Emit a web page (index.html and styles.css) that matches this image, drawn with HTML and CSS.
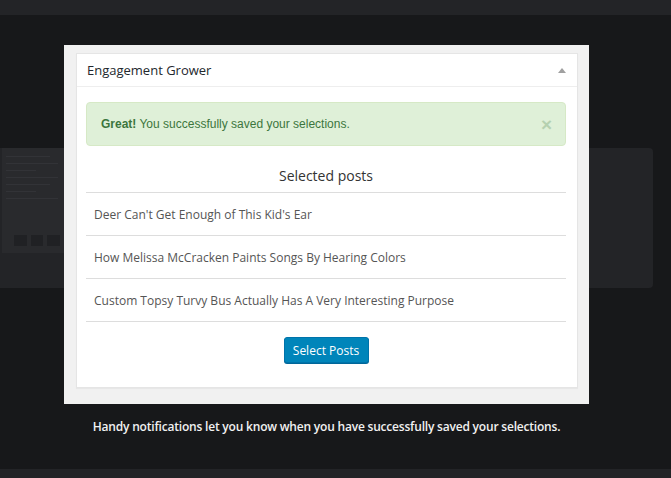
FILE: index.html
```html
<!DOCTYPE html>
<html>
<head>
<meta charset="utf-8">
<link rel="stylesheet" href="styles.css">
</head>
<body>
<div class="topbar"></div>
<div class="stage">
  <div class="bgpanel">
    <div class="bgthumb">
      <div class="ghost-line w1"></div>
      <div class="ghost-line w2"></div>
      <div class="ghost-line w3"></div>
      <div class="ghost-line w2"></div>
      <div class="ghost-line w1"></div>
      <div class="ghost-line w3"></div>
      <div class="ghost-line w2"></div>
      <div class="ghost-thumbs"><span></span><span></span><span></span></div>
    </div>
  </div>
  <div class="overlay">
    <div class="modal">
      <div class="widget">
        <div class="widget-head">
          <span class="widget-title">Engagement Grower</span>
          <span class="toggle"></span>
        </div>
        <div class="widget-body">
          <div class="alert">
            <span><strong>Great!</strong> You successfully saved your selections.</span>
            <span class="close">×</span>
          </div>
          <div class="list-title">Selected posts</div>
          <ul class="posts">
            <li>Deer Can't Get Enough of This Kid's Ear</li>
            <li>How Melissa McCracken Paints Songs By Hearing Colors</li>
            <li>Custom Topsy Turvy Bus Actually Has A Very Interesting Purpose</li>
          </ul>
          <div class="actions"><button class="btn">Select Posts</button></div>
        </div>
      </div>
    </div>
    <p class="caption">Handy notifications let you know when you have successfully saved your selections.</p>
  </div>
</div>
<div class="bottombar"></div>
</body>
</html>
```
FILE: styles.css
```css
html, body {
  margin: 0;
  padding: 0;
}
body {
  background: #17181a;
  font-family: "Open Sans", "Liberation Sans", sans-serif;
  width: 671px;
  height: 478px;
  overflow: hidden;
}
.topbar {
  height: 15px;
  background: #232427;
}
.bottombar {
  height: 9px;
  background: #232427;
}
.stage {
  position: relative;
  height: 454px;
}
.bgpanel {
  position: relative;
  top: 133px;
  width: 653px;
  height: 140px;
  background: #232427;
  border-radius: 0 4px 4px 0;
}
.bgthumb {
  margin-left: 2px;
  width: 62px;
  height: 105px;
  background: #292a2d;
  padding: 8px 4px 0 4px;
  box-sizing: border-box;
  display: flex;
  flex-direction: column;
  gap: 6px;
}
.ghost-line {
  height: 1px;
  background: #323337;
}
.ghost-line.w1 { width: 44px; }
.ghost-line.w2 { width: 52px; }
.ghost-line.w3 { width: 30px; }
.ghost-thumbs {
  display: flex;
  gap: 4px;
  margin-top: 30px;
  padding-left: 8px;
}
.ghost-thumbs span {
  width: 14px;
  height: 11px;
  background: #202124;
}
.overlay {
  position: absolute;
  left: 64px;
  top: 30px;
  width: 525px;
}
.modal {
  background: #f1f1f1;
  height: 359px;
  padding: 8px 11px 0 12px;
  box-sizing: border-box;
}
.widget {
  background: #fff;
  border: 1px solid #e5e5e5;
  box-shadow: 0 1px 1px rgba(0,0,0,0.04);
  height: 335px;
  box-sizing: border-box;
}
.widget-head {
  height: 33px;
  border-bottom: 1px solid #eee;
  display: flex;
  align-items: center;
  justify-content: space-between;
  padding: 0 11px 0 10px;
  box-sizing: border-box;
}
.widget-title {
  font-size: 13px;
  color: #23282d;
}
.toggle {
  width: 0;
  height: 0;
  border-left: 4px solid transparent;
  border-right: 4px solid transparent;
  border-bottom: 5px solid #a0a0a0;
}
.widget-body {
  padding: 15px 11px 0 9px;
}
.alert {
  height: 44px;
  box-sizing: border-box;
  background: #dff0d8;
  border: 1px solid #d6e9c6;
  border-radius: 4px;
  color: #3c763d;
  font-family: "Liberation Sans", Arial, sans-serif;
  font-size: 12px;
  display: flex;
  align-items: center;
  justify-content: space-between;
  padding: 0 13px 0 14px;
}
.alert strong {
  font-weight: bold;
}
.close {
  font-size: 19px;
  font-weight: bold;
  color: #3c763d;
  opacity: 0.25;
  line-height: 1;
}
.list-title {
  text-align: center;
  font-size: 14px;
  color: #333;
  margin-top: 20px;
  line-height: 19px;
  padding-bottom: 7px;
  border-bottom: 1px solid #ddd;
}
.posts {
  list-style: none;
  margin: 0;
  padding: 0;
}
.posts li {
  height: 43px;
  box-sizing: border-box;
  border-bottom: 1px solid #ddd;
  display: flex;
  align-items: center;
  padding-left: 8px;
  font-size: 12px;
  color: #555;
}
.actions {
  display: flex;
  justify-content: center;
  padding-top: 15px;
}
.btn {
  width: 85px;
  height: 26px;
  background: #0085ba;
  border: 1px solid #0073aa;
  border-radius: 3px;
  box-shadow: 0 1px 0 #006799;
  color: #fff;
  font-family: "Open Sans", "Liberation Sans", sans-serif;
  font-size: 12px;
  padding: 0;
}
.caption {
  margin: 14px 0 0 0;
  text-align: center;
  color: #f1f1f1;
  font-size: 12px;
  font-weight: 600;
  line-height: 18px;
  letter-spacing: -0.2px;
}
```
